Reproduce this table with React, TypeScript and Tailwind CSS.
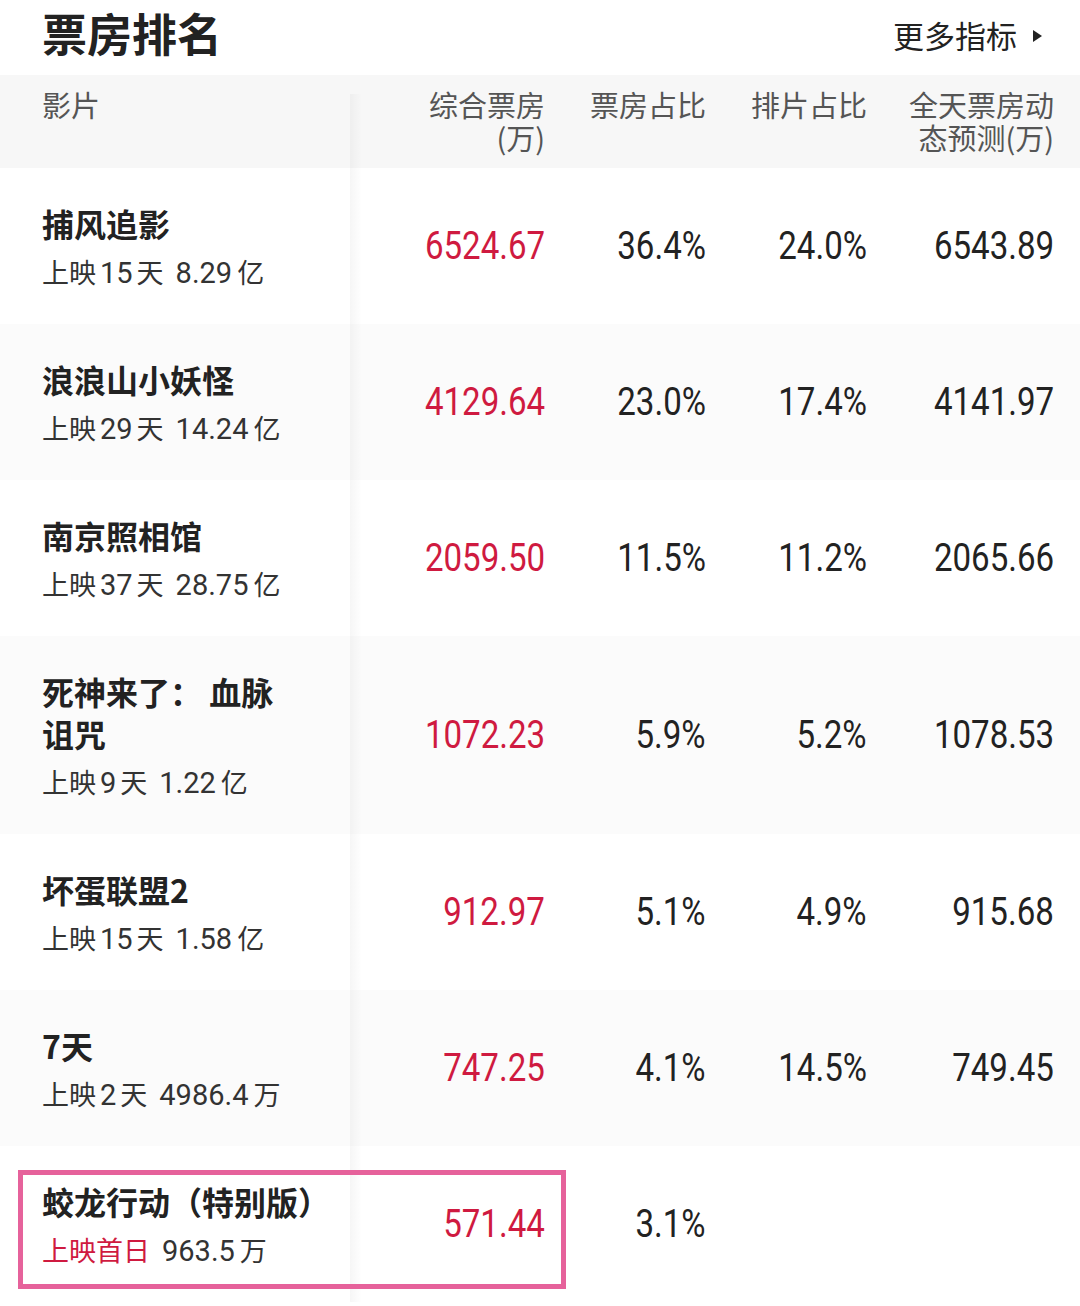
import React from "react";

type Row = {
  name: string[];
  days: string;
  total: string;
  box: string;
  share: string;
  slot: string;
  forecast: string;
  premiere?: boolean;
};

const rows: Row[] = [
  { name: ["捕风追影"], days: "15", total: "8.29亿", box: "6524.67", share: "36.4%", slot: "24.0%", forecast: "6543.89" },
  { name: ["浪浪山小妖怪"], days: "29", total: "14.24亿", box: "4129.64", share: "23.0%", slot: "17.4%", forecast: "4141.97" },
  { name: ["南京照相馆"], days: "37", total: "28.75亿", box: "2059.50", share: "11.5%", slot: "11.2%", forecast: "2065.66" },
  { name: ["死神来了：\u00a0血脉", "诅咒"], days: "9", total: "1.22亿", box: "1072.23", share: "5.9%", slot: "5.2%", forecast: "1078.53" },
  { name: ["坏蛋联盟2"], days: "15", total: "1.58亿", box: "912.97", share: "5.1%", slot: "4.9%", forecast: "915.68" },
  { name: ["7天"], days: "2", total: "4986.4万", box: "747.25", share: "4.1%", slot: "14.5%", forecast: "749.45" },
  { name: ["蛟龙行动（特别版）"], days: "", total: "963.5万", box: "571.44", share: "3.1%", slot: "", forecast: "", premiere: true },
];

const cjk = "font-['Noto_Sans_CJK_SC',sans-serif]";
const mixed = "font-['Roboto','Noto_Sans_CJK_SC',sans-serif]";

const Num: React.FC<{ value: string; red?: boolean }> = ({ value, red }) => (
  <div className="flex items-center justify-end">
    <span
      className={`inline-block origin-right scale-x-[0.87] font-['Roboto',sans-serif] text-[38px] leading-none ${
        red ? "text-[#cf1a40]" : "text-[#222]"
      }`}
    >
      {value}
    </span>
  </div>
);

// "8.29亿" -> number + unit with a little gap, like the app's auto spacing
const Total: React.FC<{ value: string }> = ({ value }) => {
  const num = value.slice(0, -1);
  const unit = value.slice(-1);
  return (
    <span className="ml-[12px]">
      <span className="text-[29px] leading-[36px]">{num}</span>
      <span className="ml-[5px]">{unit}</span>
    </span>
  );
};

const App: React.FC = () => {
  return (
    <div className={`w-[1080px] h-[1306px] overflow-hidden bg-white ${cjk}`}>
      <div className="flex h-[75px] items-center justify-between pl-[42px] pr-[38px]">
        <h1 className="text-[45px] font-bold leading-none text-[#222] -mt-[10px]">票房排名</h1>
        <div className="flex items-center gap-[16px] -mt-[4px]">
          <span className="text-[31px] text-[#222]">更多指标</span>
          <svg width="9" height="12" viewBox="0 0 9 12">
            <path d="M0 0 L9 6 L0 12 Z" fill="#222" />
          </svg>
        </div>
      </div>

      <div className="grid h-[93px] grid-cols-[350px_195px_161px_161px_187px] bg-[#f7f7f7] pr-[26px] pt-[13px] text-[29px] leading-[33px] text-[#555]">
        <div className="relative pl-[42px]">
          影片
          <div className="absolute -right-[12px] top-[6px] bottom-0 w-[12px] bg-gradient-to-r from-black/[0.035] to-transparent" />
        </div>
        <div className="flex flex-col items-end">
          <span>综合票房</span>
          <span>(万)</span>
        </div>
        <div className="text-right">票房占比</div>
        <div className="text-right">排片占比</div>
        <div className="flex flex-col items-end">
          <span>全天票房动</span>
          <span>态预测(万)</span>
        </div>
      </div>

      {rows.map((r, i) => (
        <div
          key={i}
          className={`relative grid grid-cols-[350px_195px_161px_161px_187px] pr-[26px] ${
            i % 2 === 1 ? "bg-[#fbfbfb]" : "bg-white"
          }`}
        >
          <div className="relative flex flex-col justify-center pt-[34px] pb-[33px] pl-[42px]">
            <div className="text-[32px] font-bold leading-[42px] text-[#222]">
              {r.name.map((l, j) => (
                <div key={j}>{l}</div>
              ))}
            </div>
            <div className={`mt-[11px] h-[36px] whitespace-nowrap text-[27px] leading-[36px] text-[#333] ${mixed}`}>
              {r.premiere ? (
                <span className="text-[#cf1a40]">上映首日</span>
              ) : (
                <span>
                  上映<span className="mx-[4px] text-[29px] leading-[36px]">{r.days}</span>天
                </span>
              )}
              <Total value={r.total} />
            </div>
            <div className="absolute -right-[12px] top-0 bottom-0 w-[12px] bg-gradient-to-r from-black/[0.035] to-transparent" />
          </div>
          <Num value={r.box} red />
          <Num value={r.share} />
          <Num value={r.slot} />
          <Num value={r.forecast} />
          {r.premiere && (
            <div className="pointer-events-none absolute left-[18px] top-[24px] h-[119px] w-[548px] border-[5px] border-[#e6629b]" />
          )}
        </div>
      ))}
    </div>
  );
};

export default App;
